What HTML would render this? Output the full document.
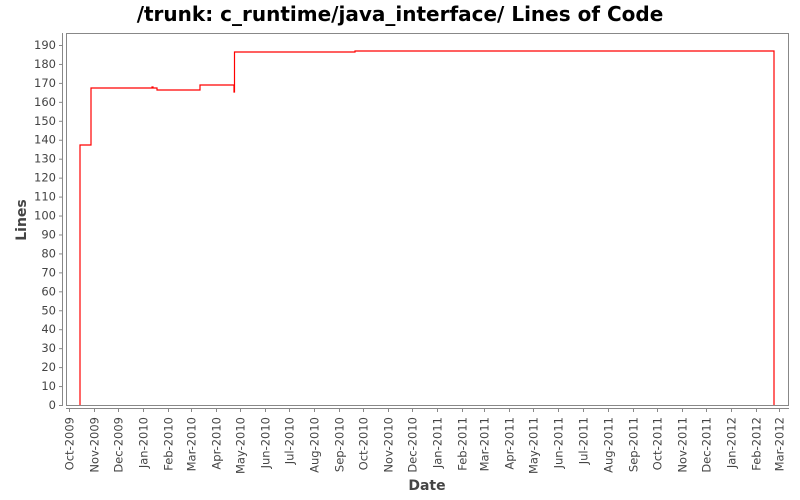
<!DOCTYPE html>
<html><head><meta charset="utf-8"><style>
body{margin:0;background:#fff;}
svg{display:block;font-family:"DejaVu Sans","Liberation Sans",sans-serif;}
</style></head><body>
<svg width="800" height="500" xmlns="http://www.w3.org/2000/svg">
<rect width="800" height="500" fill="#fff"/>
<text x="400" y="21" text-anchor="middle" font-size="20" font-weight="bold" fill="#000">/trunk: c_runtime/java_interface/ Lines of Code</text>
<rect x="66.5" y="33.5" width="722" height="372" fill="#fff" stroke="#888" stroke-width="1"/>
<line x1="62.5" y1="33" x2="62.5" y2="406" stroke="#888"/>
<line x1="66" y1="408.5" x2="789" y2="408.5" stroke="#888"/>
<g font-size="11.5" fill="#444" text-anchor="end" id="yl"></g>
<g id="yt" stroke="#888"></g>
<g font-size="11.5" fill="#444" id="xl"></g>
<g id="xt" stroke="#888"></g>
<polyline fill="none" stroke="#f00" stroke-width="1.2" points="80,405 80,145 91,145 91,88 152,88 152,87 153,87 153,88 157,88 157,90 200,90 200,85 234,85 234,92 234.5,92 234.5,52 355,52 355,51 774,51 774,405"/>
<text x="26" y="220" transform="rotate(-90 26 220)" text-anchor="middle" font-size="14" fill="#444" font-weight="bold">Lines</text>
<text x="427" y="490" text-anchor="middle" font-size="14" fill="#444" font-weight="bold">Date</text>
</svg>
<script>
var ns="http://www.w3.org/2000/svg";
var yl=document.getElementById('yl'),yt=document.getElementById('yt');
for(var v=0;v<=190;v+=10){var y=405-v*1.8947;
var t=document.createElementNS(ns,'text');t.setAttribute('x',56);t.setAttribute('y',y+4);t.textContent=v;yl.appendChild(t);
var l=document.createElementNS(ns,'line');l.setAttribute('x1',59);l.setAttribute('x2',62);l.setAttribute('y1',y+.5);l.setAttribute('y2',y+.5);yt.appendChild(l);}
var m=["Oct-2009","Nov-2009","Dec-2009","Jan-2010","Feb-2010","Mar-2010","Apr-2010","May-2010","Jun-2010","Jul-2010","Aug-2010","Sep-2010","Oct-2010","Nov-2010","Dec-2010","Jan-2011","Feb-2011","Mar-2011","Apr-2011","May-2011","Jun-2011","Jul-2011","Aug-2011","Sep-2011","Oct-2011","Nov-2011","Dec-2011","Jan-2012","Feb-2012","Mar-2012"];
var d=[0,31,61,92,123,151,182,212,243,273,304,335,365,396,426,457,488,516,547,577,608,638,669,700,730,761,791,822,853,882];
var xl=document.getElementById('xl'),xt=document.getElementById('xt');
for(var i=0;i<m.length;i++){var x=Math.round(69+d[i]*0.805)+.5;
var l=document.createElementNS(ns,'line');l.setAttribute('x1',x);l.setAttribute('x2',x);l.setAttribute('y1',409);l.setAttribute('y2',412);xt.appendChild(l);
var t=document.createElementNS(ns,'text');var bx=x+4,by=417;t.setAttribute('x',bx);t.setAttribute('y',by);t.setAttribute('text-anchor','end');t.setAttribute('transform','rotate(-90 '+bx+' '+by+')');t.textContent=m[i];xl.appendChild(t);}
</script>
</body></html>
